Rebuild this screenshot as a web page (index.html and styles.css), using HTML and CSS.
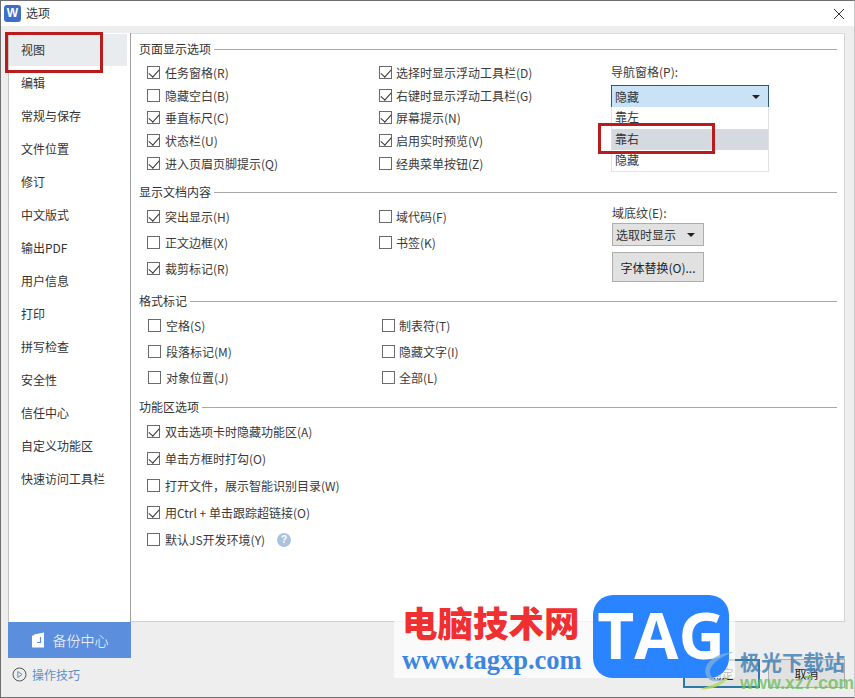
FILE: index.html
```html
<!DOCTYPE html>
<html lang="zh-CN">
<head>
<meta charset="utf-8">
<title>选项</title>
<link rel="stylesheet" href="styles.css">
</head>
<body>
<div class="window">
  <header class="titlebar">
    <div class="app-icon">W</div>
    <div class="title">选项</div>
    <svg class="close" width="12" height="12" viewBox="0 0 12 12"><path d="M1 1L11 11M11 1L1 11" stroke="#333" stroke-width="1" fill="none"/></svg>
  </header>
  <div class="main">
    <nav class="nav">
      <div class="nav-item active">视图</div>
      <div class="nav-item">编辑</div>
      <div class="nav-item">常规与保存</div>
      <div class="nav-item">文件位置</div>
      <div class="nav-item">修订</div>
      <div class="nav-item">中文版式</div>
      <div class="nav-item">输出PDF</div>
      <div class="nav-item">用户信息</div>
      <div class="nav-item">打印</div>
      <div class="nav-item">拼写检查</div>
      <div class="nav-item">安全性</div>
      <div class="nav-item">信任中心</div>
      <div class="nav-item">自定义功能区</div>
      <div class="nav-item">快速访问工具栏</div>
    </nav>
    <section class="panel">
      <div class="legend"><span>页面显示选项</span></div>
      <div class="cols g1">
        <div class="col">
          <label class="row"><i class="cb on"></i>任务窗格(R)</label>
          <label class="row"><i class="cb"></i>隐藏空白(B)</label>
          <label class="row"><i class="cb on"></i>垂直标尺(C)</label>
          <label class="row"><i class="cb on"></i>状态栏(U)</label>
          <label class="row"><i class="cb on"></i>进入页眉页脚提示(Q)</label>
        </div>
        <div class="col second">
          <label class="row"><i class="cb on"></i>选择时显示浮动工具栏(D)</label>
          <label class="row"><i class="cb on"></i>右键时显示浮动工具栏(G)</label>
          <label class="row"><i class="cb on"></i>屏幕提示(N)</label>
          <label class="row"><i class="cb on"></i>启用实时预览(V)</label>
          <label class="row"><i class="cb"></i>经典菜单按钮(Z)</label>
        </div>
        <div class="col extra nav-pane">
          <div class="field-label">导航窗格(P):</div>
          <div class="dropdown">
            <div class="select open"><span>隐藏</span><b class="caret"></b></div>
            <div class="popup">
              <div class="opt">靠左</div>
              <div class="opt hover">靠右</div>
              <div class="opt">隐藏</div>
            </div>
          </div>
        </div>
      </div>

      <div class="legend"><span>显示文档内容</span></div>
      <div class="cols g2">
        <div class="col">
          <label class="row"><i class="cb on"></i>突出显示(H)</label>
          <label class="row"><i class="cb"></i>正文边框(X)</label>
          <label class="row"><i class="cb on"></i>裁剪标记(R)</label>
        </div>
        <div class="col second">
          <label class="row"><i class="cb"></i>域代码(F)</label>
          <label class="row"><i class="cb"></i>书签(K)</label>
        </div>
        <div class="col extra shade">
          <div class="field-label">域底纹(E):</div>
          <div class="select plain"><span>选取时显示</span><b class="caret"></b></div>
          <div class="btn wide">字体替换(O)...</div>
        </div>
      </div>

      <div class="legend l3"><span>格式标记</span></div>
      <div class="cols g2 g3">
        <div class="col">
          <label class="row"><i class="cb"></i>空格(S)</label>
          <label class="row"><i class="cb"></i>段落标记(M)</label>
          <label class="row"><i class="cb"></i>对象位置(J)</label>
        </div>
        <div class="col second">
          <label class="row"><i class="cb"></i>制表符(T)</label>
          <label class="row"><i class="cb"></i>隐藏文字(I)</label>
          <label class="row"><i class="cb"></i>全部(L)</label>
        </div>
      </div>

      <div class="legend"><span>功能区选项</span></div>
      <div class="cols g4">
        <div class="col">
          <label class="row"><i class="cb on"></i>双击选项卡时隐藏功能区(A)</label>
          <label class="row"><i class="cb on"></i>单击方框时打勾(O)</label>
          <label class="row"><i class="cb"></i>打开文件，展示智能识别目录(W)</label>
          <label class="row"><i class="cb on"></i>用Ctrl + 单击跟踪超链接(O)</label>
          <label class="row"><i class="cb"></i>默认JS开发环境(Y)<em class="help">?</em></label>
        </div>
      </div>
    </section>
    <div class="side-foot">
      <div class="backup">
        <svg width="16" height="16" viewBox="0 0 16 16"><path d="M3 2.5L13 0.5V15.5H1V3.5H3Z" fill="#fff"/><path d="M9.5 5V10.5H6" stroke="#5b8edd" stroke-width="1.2" fill="none"/></svg>
        <span>备份中心</span>
      </div>
      <div class="tips">
        <svg width="15" height="15" viewBox="0 0 15 15"><circle cx="7.5" cy="7.5" r="6.5" stroke="#555" fill="none"/><path d="M5.8 4.5L10 7.5L5.8 10.5Z" stroke="#5b8ec8" fill="none"/></svg>
        <span>操作技巧</span>
      </div>
    </div>
    <footer class="footer">
      <div class="btn ok">确定</div>
      <div class="btn">取消</div>
    </footer>
  </div>

  <div class="mark mark-nav"></div>
  <div class="mark mark-opt"></div>

  <div class="wm-plate">
    <div class="wm-cn">电脑技术网</div>
    <div class="wm-url">www.tagxp.com</div>
  </div>
  <div class="wm-tag">TAG</div>
  <svg class="wm-swirl" width="44" height="44" viewBox="0 0 44 44"><path d="M38 3C20 4 6 14 10 26C12 33 22 34 30 30C22 32 15 30 14 24C13 16 24 8 38 3Z" fill="#7fb2dc" opacity=".75"/><path d="M4 40C14 42 30 36 36 24C30 32 16 36 4 40Z" fill="#b7d65a" opacity=".85"/></svg>
  <div class="wm-xz">
    <div class="wm-xz-cn">极光下载站</div>
    <div class="wm-xz-url">www.xz7.com</div>
  </div>
</div>
</body>
</html>
```
FILE: styles.css
```css
* { box-sizing: border-box; }
html, body { margin: 0; padding: 0; }
body {
  width: 855px;
  height: 698px;
  overflow: hidden;
  font-family: "Noto Sans CJK SC", "Liberation Sans", sans-serif;
  font-size: 12px;
  color: #333;
}
.window {
  position: relative;
  width: 855px;
  height: 698px;
  background: #eeeeee;
  border: 1px solid #6e6e6e;
  border-right-color: #c8c8c8;
  display: flex;
  flex-direction: column;
}
.titlebar {
  height: 25px;
  background: #fff;
  display: flex;
  align-items: center;
  padding: 0 9px 0 3px;
  flex: none;
}
.app-icon {
  width: 17px;
  height: 17px;
  background: #3d6fc9;
  border-radius: 3px;
  color: #fff;
  font: bold 12px/17px "Liberation Sans", sans-serif;
  text-align: center;
}
.title { margin-left: 5px; margin-bottom: 2px; font-size: 12px; color: #333; flex: 1; }
.close { display: block; }

.main {
  flex: 1;
  display: grid;
  grid-template-columns: 123px 714px;
  grid-template-rows: 589px 1fr;
  padding: 7px 0 0 7px;
}
.nav {
  background: #fff;
  border-left: 1px solid #c4c4c4;
  border-right: 1px solid #a0a0a0;
  padding-top: 1px;
}
.nav-item { height: 33px; line-height: 31px; padding-left: 12px; margin-right: 3px; color: #333; }
.nav-item.active { background: #e9ecef; height: 32px; margin-bottom: 1px; }
.backup {
  height: 36px;
  background: #5b8edd;
  color: #fff;
  font-size: 14px;
  font-weight: 300;
  display: flex;
  align-items: center;
  justify-content: center;
  gap: 6px;
}
.tips { display: flex; align-items: center; gap: 5px; padding: 8px 0 0 4px; color: #5b8ec8; }

.panel {
  background: #fff;
  border-top: 1px solid #dcdcdc;
  border-right: 1px solid #d4d4d4;
  border-bottom: 1px solid #d0d0d0;
  padding: 7px 7px 0 8px;
}
.legend { height: 16px; line-height: 16px; display: flex; align-items: center; gap: 3px; color: #333; margin-top: 8px; }
.legend:first-child { margin-top: 0; }
.legend::after { content: ""; flex: 1; height: 1px; background: #a8a8a8; }
.legend.l3 { margin-top: 11px; }

.cols { display: grid; grid-template-columns: 232px 232px 1fr; margin-top: 4px; padding-left: 8px; }
.col { display: flex; flex-direction: column; }
.row { display: flex; align-items: center; gap: 5px; white-space: nowrap; color: #3a3a3a; }
.second .row { gap: 4px; }
.g1 .row { height: 22.75px; }
.g1 { height: 115px; }
.g2 { margin-top: 3px; height: 79px; }
.g2 .row { height: 26px; }
.g3 { grid-template-columns: 234px 1fr; padding-left: 9px; }
.g4 { margin-top: 3px; }
.g4 .row { height: 27px; }

.cb {
  position: relative;
  width: 13px;
  height: 13px;
  border: 1px solid #6a6a6a;
  background: #fff;
  flex: none;
}
.cb.on::after {
  content: "";
  position: absolute;
  left: 3px;
  top: 0;
  width: 5px;
  height: 9px;
  border-right: 1px solid #333;
  border-bottom: 1px solid #333;
  transform: rotate(42deg);
}
.help {
  width: 14px;
  height: 14px;
  border-radius: 50%;
  background: #a8c4e0;
  color: #fff;
  font: bold 10px/14px "Liberation Sans", sans-serif;
  text-align: center;
  margin-left: 7px;
}

.extra { padding-top: 4px; }
.field-label { height: 16px; line-height: 16px; color: #3a3a3a; }
.nav-pane .field-label { margin-top: -1px; }
.dropdown { position: relative; margin-top: 5px; width: 158px; }
.select { display: flex; align-items: center; justify-content: space-between; }
.select.open {
  height: 22px;
  background: #c9e2f5;
  border: 1px solid #2c5a70;
  border-bottom: 0;
  padding: 0 8px 0 3px;
}
.caret { width: 0; height: 0; border-left: 4px solid transparent; border-right: 4px solid transparent; border-top: 4px solid #222; }
.popup {
  position: absolute;
  left: 0;
  top: 22px;
  width: 158px;
  height: 65px;
  background: #fff;
  border: 1px solid #e2e2e2;
  border-top: 0;
  z-index: 2;
}
.opt { height: 21.6px; line-height: 20px; padding-left: 3px; }
.opt.hover { background: #d5dae0; }
.shade { padding-top: 2px; padding-left: 1px; }
.select.plain {
  width: 92px;
  height: 23px;
  margin-top: 2px;
  background: #e1e1e1;
  border: 1px solid #adadad;
  padding: 0 8px 0 3px;
}
.btn {
  display: flex;
  align-items: center;
  justify-content: center;
  background: #e1e1e1;
  border: 1px solid #adadad;
  color: #222;
  width: 77px;
  height: 29px;
}
.btn.wide { width: 92px; height: 30px; margin-top: 6px; }
.footer { display: flex; justify-content: flex-end; align-items: flex-start; gap: 8px; padding: 37px 0 0 0; }
.btn.ok { border: 2px solid #2a7aa8; }

.mark { position: absolute; border: 3px solid #b81c1c; z-index: 3; }
.mark-nav { left: 4px; top: 31px; width: 98px; height: 41px; }
.mark-opt { left: 597px; top: 122px; width: 117px; height: 31px; }

.wm-plate {
  position: absolute;
  left: 393px;
  top: 599px;
  width: 341px;
  height: 78px;
  background: rgba(255, 255, 255, .72);
  padding: 0 0 0 8px;
  z-index: 4;
}
.wm-cn {
  font-family: "Noto Sans CJK SC", sans-serif;
  font-weight: 900;
  font-size: 35.5px;
  line-height: 40px;
  color: #f03030;
  margin-top: 2px;
}
.wm-url {
  font-family: "Liberation Serif", serif;
  font-weight: bold;
  font-size: 26.5px;
  line-height: 28px;
  color: #3a86e0;
  margin-top: 4px;
}
.wm-tag {
  position: absolute;
  left: 592px;
  top: 594px;
  width: 136px;
  height: 83px;
  background: #2b84ff;
  border-radius: 20px;
  color: #fff;
  font: bold 64px/80px "Open Sans", "Liberation Sans", sans-serif;
  text-align: center;
  z-index: 5;
}
.wm-swirl { position: absolute; left: 695px; top: 648px; z-index: 6; }
.wm-xz { position: absolute; left: 739px; top: 647px; z-index: 6; width: 110px; }
.wm-xz-cn { font-size: 21px; font-weight: 700; line-height: 26px; color: rgba(70, 130, 180, .85); white-space: nowrap; }
.wm-xz-url { font: bold 17.5px/18px "Liberation Sans", sans-serif; color: rgba(110, 190, 90, .8); white-space: nowrap; }
```
